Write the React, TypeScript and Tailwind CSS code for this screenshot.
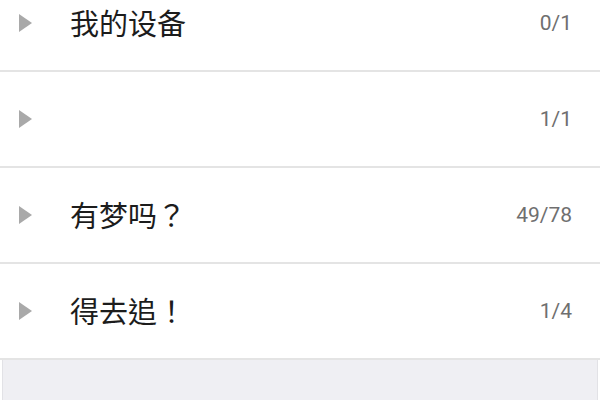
import React from "react";

// Grupos da lista de contatos
const groups = [
  { name: "我的设备", count: "0/1" },
  { name: "", count: "1/1" },
  { name: "有梦吗？", count: "49/78" },
  { name: "得去追！", count: "1/4" },
];

function Arrow() {
  return (
    <svg width="13" height="18" viewBox="0 0 13 18" className="shrink-0">
      <polygon points="0,0 13,9 0,18" fill="#a9a9a9" />
    </svg>
  );
}

export default function App() {
  return (
    <div
      className="w-[600px] h-[400px] overflow-hidden bg-white"
      style={{ fontFamily: '"Roboto", "Noto Sans CJK SC", sans-serif' }}
    >
      <div className="-mt-[24px]">
        {groups.map((g, i) => (
          <div
            key={i}
            className="flex items-center h-[96px] border-b-2 border-[#e4e4e4] pl-[19px] pr-[28px]"
          >
            <Arrow />
            <span className="ml-[38px] flex-1 -mt-[1px] font-['Noto_Sans_CJK_TC',sans-serif] text-[29px] text-[#1c1c1c] leading-none">
              {g.name}
            </span>
            <span className="text-[21px] text-[#6f6f6f] leading-none">{g.count}</span>
          </div>
        ))}
      </div>
      <div className="h-[60px] mx-[2px] bg-[#efeff3] border-x border-[#e2e2e6]" />
    </div>
  );
}
